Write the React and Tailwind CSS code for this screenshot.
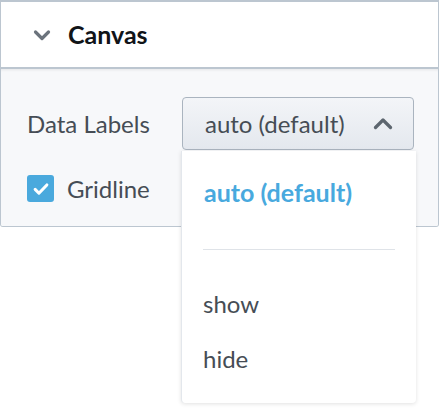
import { useState } from 'react';

const font = { fontFamily: 'Lato, "Open Sans", sans-serif' };

function ChevronDown({ className }) {
  return (
    <svg viewBox="0 0 18 12" className={className} fill="none" stroke="currentColor" strokeWidth="3.2" strokeLinecap="round" strokeLinejoin="round">
      <path d="M2.5 3l6.5 6.5L15.5 3" />
    </svg>
  );
}

function ChevronUp({ className }) {
  return (
    <svg viewBox="0 0 20 12" className={className} fill="none" stroke="currentColor" strokeWidth="3.2" strokeLinecap="round" strokeLinejoin="round">
      <path d="M2.5 9.5L10 2l7.5 7.5" />
    </svg>
  );
}

export default function App() {
  const [gridline, setGridline] = useState(true);
  const options = ['show', 'hide'];

  return (
    <div className="relative w-[440px] h-[408px] bg-white overflow-hidden" style={font}>
      {/* Panel */}
      <div className="w-[439px] border border-t-2 border-[#bcc6d0] rounded-b-[3px] overflow-hidden">
        <div className="flex items-center h-[67px] bg-white border-b-2 border-[#bcc6d0]">
          <ChevronDown className="w-[18px] h-[12px] ml-[32px] text-[#6b737c]" />
          <span className="ml-[17px] text-[25px] font-bold text-[#111418] leading-none">Canvas</span>
        </div>
        <div className="bg-[#f7f8fa] h-[157px] pl-[26px] pt-[28px] shadow-[inset_0_3px_3px_-2px_rgba(0,0,0,0.08)]">
          <div className="flex items-center h-[53px]">
            <span className="w-[155px] text-[24px] text-[#464d55]">Data Labels</span>
            <button className="flex items-center justify-between w-[232px] h-[53px] pl-[22px] pr-[20px] rounded-[4px] border border-[#aab4bf] bg-gradient-to-b from-[#f3f5f8] to-[#e4e8ee] text-[24px] text-[#464d55]">
              <span>auto (default)</span>
              <ChevronUp className="w-[20px] h-[12px] text-[#5d666f]" />
            </button>
          </div>
          <div className="flex items-center mt-[25px] h-[27px]">
            <button
              onClick={() => setGridline(!gridline)}
              className="flex items-center justify-center w-[27px] h-[27px] rounded-[3px] bg-[#4aa9dd]"
            >
              {gridline && (
                <svg viewBox="0 0 20 20" className="w-[18px] h-[18px]" fill="none" stroke="white" strokeWidth="3.4" strokeLinecap="round" strokeLinejoin="round">
                  <path d="M3.5 10.5l4.2 4.2L16.5 5.5" />
                </svg>
              )}
            </button>
            <span className="ml-[13px] text-[24px] text-[#464d55]">Gridline</span>
          </div>
        </div>
      </div>

      {/* Dropdown menu */}
      <div className="absolute left-[181px] top-[151px] w-[235px] h-[252px] bg-white rounded-b-[4px] border-l border-[#e3e7ec] shadow-[0_1px_4px_rgba(0,0,0,0.12)] pt-[14px]">
        <div className="flex items-center h-[55px] pl-[22px] text-[25px] font-bold text-[#48a9de]">auto (default)</div>
        <div className="mx-[21px] mt-[29px] mb-[26px] h-px bg-[#dfe3e8]" />
        {options.map((o) => (
          <div key={o} className="flex items-center h-[55px] pl-[21px] text-[24px] text-[#464d55]">{o}</div>
        ))}
      </div>
    </div>
  );
}
